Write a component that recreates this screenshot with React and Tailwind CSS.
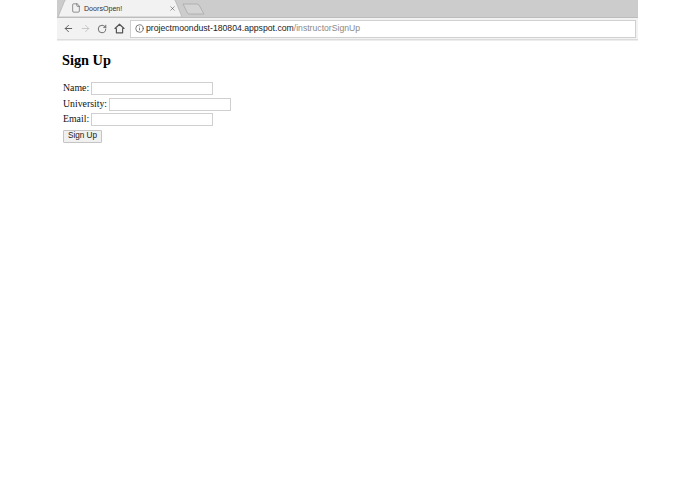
import { ArrowLeft, ArrowRight, RotateCw, Info, File, X } from 'lucide-react'

function Tab() {
  return (
    <div className="relative w-[127px] h-[18px] flex items-center pl-[14px] shrink-0">
      <svg className="absolute inset-0" width="127" height="18" viewBox="0 0 127 18">
        <path d="M1 18 L8 1 Q8.500 0.500 10 0.500 L116 0.500 Q117.500 0.500 118 1 L125 18 Z" fill="#f2f2f2" stroke="#b0b0b0" strokeWidth="0.7" />
      </svg>
      <File className="relative text-[#555] w-[10px] h-[10px]" strokeWidth={1.5} />
      <span className="relative ml-[3px] text-[7.100px] text-[#333] w-[85px] leading-[10px] mt-[1px]">DoorsOpen!</span>
      <X className="relative text-[#555] w-[7px] h-[7px]" strokeWidth={2} />
    </div>
  )
}

function Row({ label }) {
  return (
    <div className="h-[15.500px] flex items-center">
      <span>{label}</span>
      <input className="ml-[2px] w-[122px] h-[13px] bg-white border border-[#cfcfcf]" />
    </div>
  )
}

export default function App() {
  return (
    <div className="w-[695px] h-[494px] bg-white overflow-hidden font-['Liberation_Serif',serif]">
      <div className="w-[581px] ml-[57px] font-['Liberation_Sans',sans-serif]">
        <div className="h-[18px] bg-[#cccccc] flex items-end border-b border-[#bdbdbd]">
          <Tab />
          <svg className="-ml-[2px] mb-[2px]" width="24" height="12" viewBox="0 0 24 12">
            <path d="M1 1 L15 1 Q16 1 17 2 L22 11 L7 11 Q6 11 5.500 10 Z" fill="#d4d4d4" stroke="#a8a8a8" strokeWidth="0.8" />
          </svg>
        </div>
        <div className="h-[22px] bg-[#f2f2f2] flex items-center border-b border-[#dcdcdc] pl-[6px] pr-[2px]">
          <ArrowLeft className="text-[#555] w-[11px] h-[11px]" strokeWidth={2} />
          <ArrowRight className="ml-[6px] text-[#c4c4c4] w-[11px] h-[11px]" strokeWidth={2} />
          <RotateCw className="ml-[6px] text-[#555] w-[10px] h-[10px]" strokeWidth={2} />
          <svg className="ml-[7px] text-[#555]" width="11" height="11" viewBox="0 0 11 11" fill="none" stroke="currentColor" strokeWidth="1.2" strokeLinejoin="round">
            <path d="M1 5.500 L5.500 1.200 L10 5.500 H8.600 V9.800 H2.400 V5.500 Z" />
          </svg>
          <div className="ml-[5px] flex-1 h-[18px] bg-white border border-[#d0d0d0] flex items-center pl-[4px] text-[8.670px]">
            <Info className="text-[#555] w-[9px] h-[9px]" strokeWidth={2} />
            <span className="ml-[2px] text-[#222]">projectmoondust-180804.appspot.com</span>
            <span className="text-[#8a8a8a]">/instructorSignUp</span>
          </div>
        </div>
        <div className="h-[1px] bg-[#ececec]"></div>
      </div>
      <div className="ml-[62px] text-[#111]">
        <h1 className="mt-[10px] text-[14.300px] leading-[18px] font-bold text-black">Sign Up</h1>
        <form className="mt-[12px] ml-[1px] flex flex-col text-[9.800px]">
          <Row label="Name:" />
          <Row label="University:" />
          <Row label="Email:" />
          <button type="button" className="mt-[2px] w-[39px] h-[13px] bg-[#f0f0f0] border border-[#c4c4c4] rounded-[1px] text-[8.200px] text-[#222] font-['Liberation_Sans',sans-serif] flex items-center justify-center">Sign Up</button>
        </form>
      </div>
    </div>
  )
}
